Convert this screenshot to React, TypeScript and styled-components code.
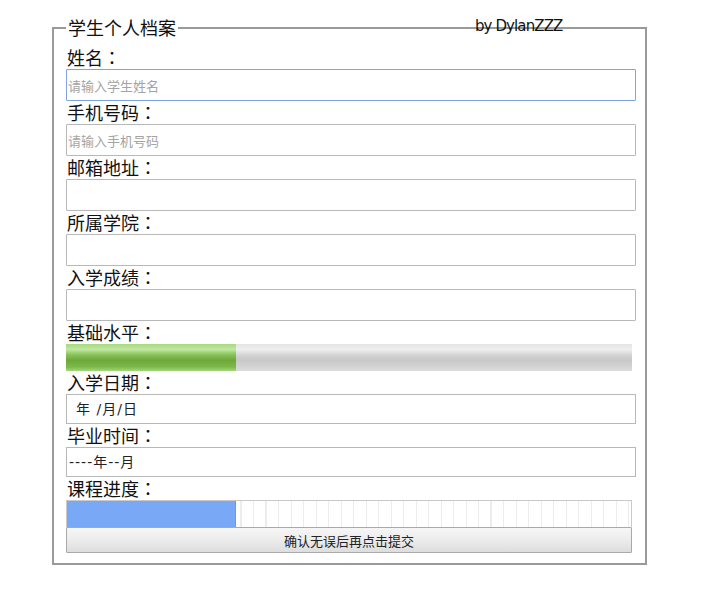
import styled, { createGlobalStyle } from 'styled-components';

const GlobalStyle = createGlobalStyle`
  html, body {
    margin: 0;
    padding: 0;
    background: #fff;
    font-family: "Noto Sans CJK SC", "Liberation Sans", sans-serif;
    color: #111;
  }
`;

const Page = styled.div`
  padding: 16px 0 0 52px;
`;

const Fieldset = styled.fieldset`
  position: relative;
  box-sizing: border-box;
  width: 595px;
  margin: 0;
  padding: 7px 8px 10px 12px;
  border: 2px solid #9a9a9a;
  display: flex;
  flex-direction: column;
`;

const Legend = styled.legend`
  font-size: 18px;
  line-height: 23px;
  padding: 0 2px;
  margin-left: 0;
`;

const Author = styled.span`
  position: absolute;
  top: -22px;
  left: 421px;
  font-family: "DejaVu Sans", "Noto Sans CJK SC", sans-serif;
  font-size: 15px;
  letter-spacing: -0.9px;
  line-height: 19px;
  color: #111;
`;

const Label = styled.label`
  display: block;
  font-size: 18px;
  line-height: 23px;
  height: 23px;
  padding-left: 1px;
`;

const Colon = styled.span`
  font-family: "Noto Sans CJK TC", sans-serif;
`;

const Row = styled.div`
  display: flex;
  flex-direction: column;
`;

const TextInput = styled.input<{ $focused?: boolean }>`
  box-sizing: border-box;
  width: 570px;
  height: 32px;
  margin: 0;
  padding: 0 1px;
  font-family: "Noto Sans CJK SC", sans-serif;
  font-size: 13px;
  border: 1px solid ${(p) => (p.$focused ? '#7ea3e6' : '#b8b8b8')};
  border-radius: 1px;
  outline: none;
  background: #fff;

  &::placeholder {
    color: #a4a4a4;
  }
`;

const FakeDate = styled.div<{ $pad: number }>`
  box-sizing: border-box;
  width: 570px;
  height: 30px;
  border: 1px solid #b8b8b8;
  padding-left: ${(p) => p.$pad}px;
  font-family: "DejaVu Sans", "Noto Sans CJK SC", sans-serif;
  font-size: 14px;
  letter-spacing: 1px;
  line-height: 28px;
  color: #222;
  white-space: pre;
`;

const Meter = styled.div`
  width: 566px;
  height: 27px;
  background: linear-gradient(
    to bottom,
    #e4e4e4 0%,
    #eeeeee 20%,
    #d0d0d0 45%,
    #c8c8c8 60%,
    #d4d4d4 85%,
    #dcdcdc 100%
  );
`;

const MeterFill = styled.div`
  height: 100%;
  background: linear-gradient(
    to bottom,
    #a6d97e 0%,
    #c2e7a4 20%,
    #86c356 40%,
    #6fa83a 60%,
    #7cb84a 85%,
    #a4d87c 100%
  );
`;

const Progress = styled.div`
  box-sizing: border-box;
  width: 566px;
  height: 27px;
  border: 1px solid #c9c9c9;
  border-bottom: none;
  background-color: #fff;
  background-image: repeating-linear-gradient(
    to right,
    #fff 0px,
    #fff 11px,
    #ececec 11px,
    #ececec 12.5px
  );
`;

const ProgressFill = styled.div`
  height: 100%;
  background: #78a8f6;
  border-right: 1px solid #6b9ae8;
  box-sizing: border-box;
`;

const SubmitButton = styled.button`
  box-sizing: border-box;
  width: 566px;
  height: 26px;
  margin: 0;
  padding: 0;
  border: 1px solid #a9a9a9;
  border-radius: 1px;
  background: linear-gradient(to bottom, #f6f6f6 0%, #ececec 50%, #dddddd 100%);
  font-family: "Noto Sans CJK SC", sans-serif;
  font-size: 13px;
  color: #222;
`;

const fields = [
  { label: '姓名', placeholder: '请输入学生姓名', focused: true },
  { label: '手机号码', placeholder: '请输入手机号码' },
  { label: '邮箱地址', placeholder: '' },
  { label: '所属学院', placeholder: '' },
  { label: '入学成绩', placeholder: '' },
];

const FieldLabel = ({ text }: { text: string }) => (
  <Label>
    {text}
    <Colon>：</Colon>
  </Label>
);

const App = () => {
  return (
    <Page>
      <GlobalStyle />
      <Fieldset>
        <Legend>学生个人档案</Legend>
        <Author>by DylanZZZ</Author>
        {fields.map((f) => (
          <Row key={f.label}>
            <FieldLabel text={f.label} />
            <TextInput placeholder={f.placeholder} $focused={f.focused} />
          </Row>
        ))}
        <FieldLabel text="基础水平" />
        <Meter>
          <MeterFill style={{ width: `${0.3 * 100}%` }} />
        </Meter>
        <FieldLabel text="入学日期" />
        <FakeDate $pad={9}>年 /月/日</FakeDate>
        <FieldLabel text="毕业时间" />
        <FakeDate $pad={2}>----年--月</FakeDate>
        <FieldLabel text="课程进度" />
        <Progress>
          <ProgressFill style={{ width: `${0.3 * 100}%` }} />
        </Progress>
        <SubmitButton>确认无误后再点击提交</SubmitButton>
      </Fieldset>
    </Page>
  );
};

export default App;
